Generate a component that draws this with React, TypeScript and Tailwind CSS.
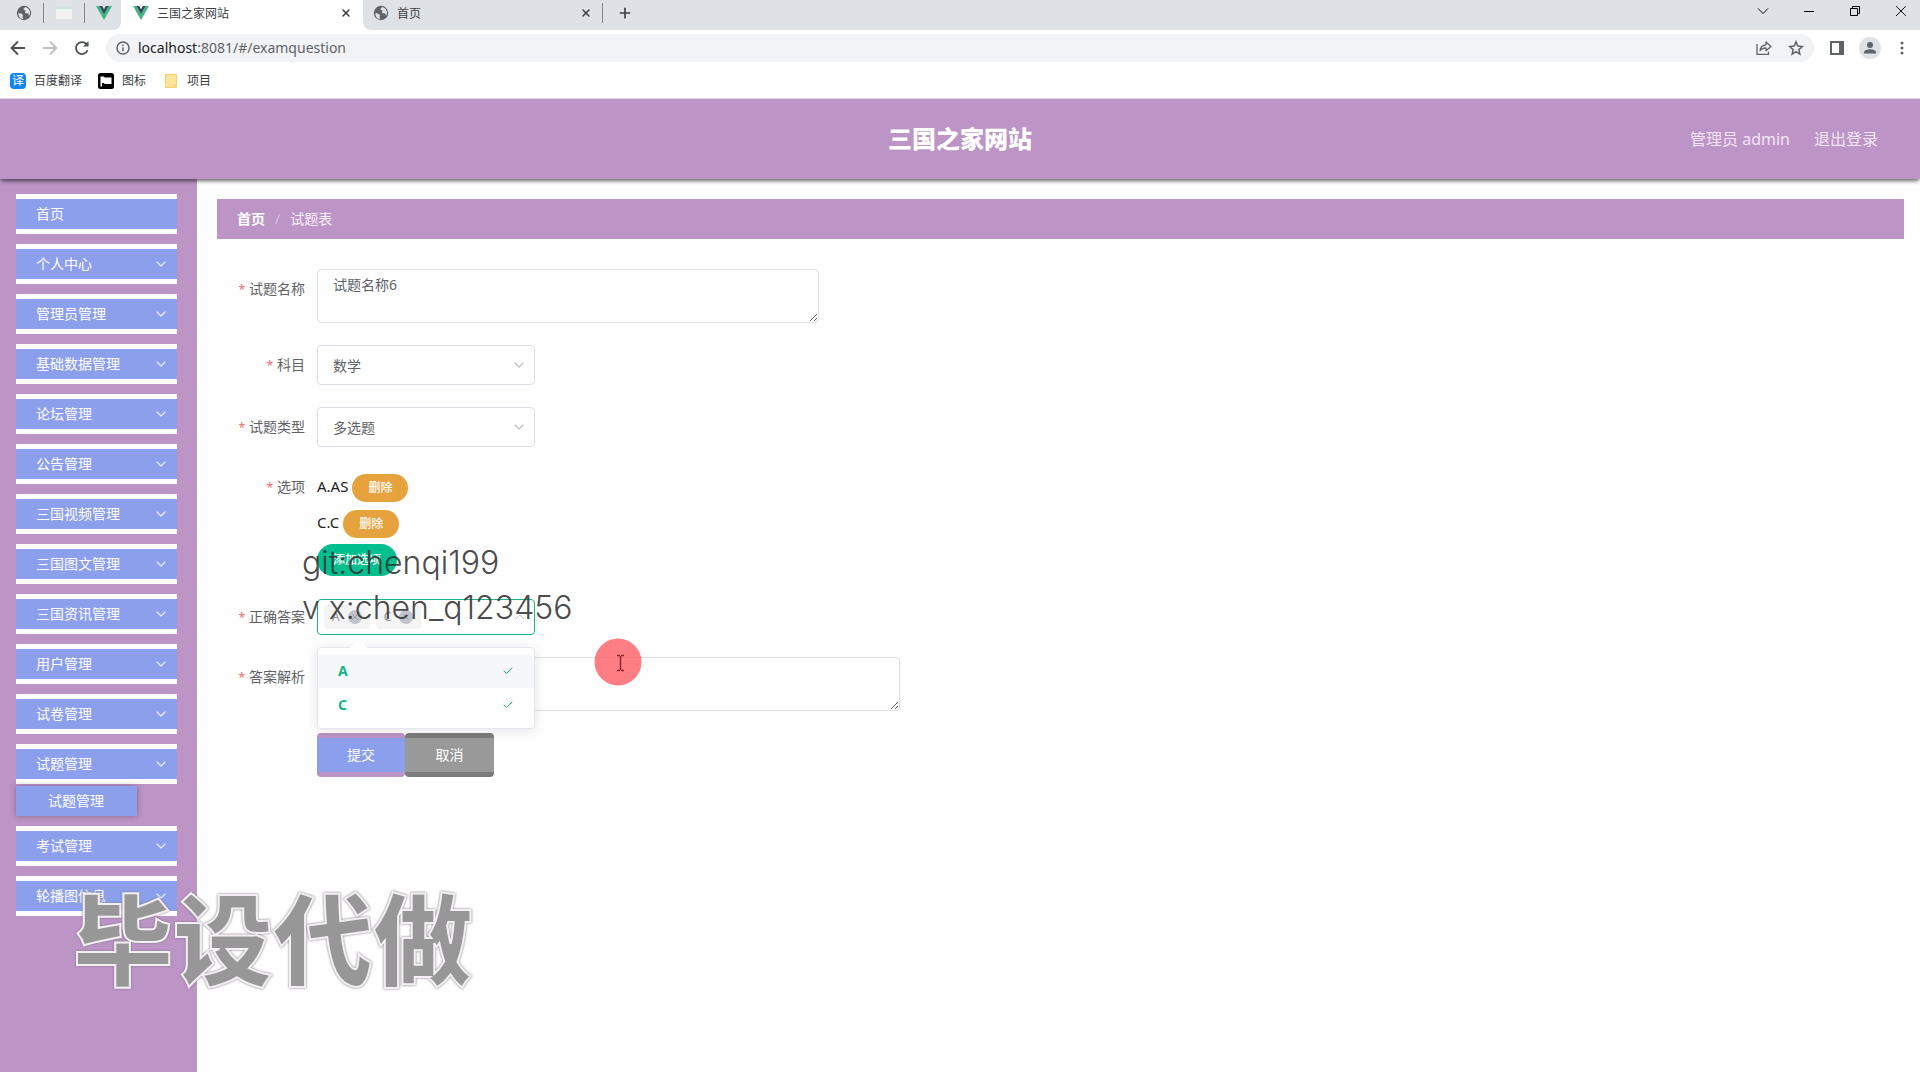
import { useState } from 'react';
import type { ReactNode } from 'react';
import { Check, ChevronDown, ChevronUp, Plus, X } from 'lucide-react';

const MENU = [
  '首页',
  '个人中心',
  '管理员管理',
  '基础数据管理',
  '论坛管理',
  '公告管理',
  '三国视频管理',
  '三国图文管理',
  '三国资讯管理',
  '用户管理',
  '试卷管理',
  '试题管理',
  '考试管理',
  '轮播图信息',
];

function VueLogo() {
  return (
    <svg viewBox="0 0 16 14" className="h-3.5 w-4 shrink-0">
      <path d="M0 0h3.3L8 8.2 12.7 0H16L8 14z" fill="#41b883" />
      <path d="M3.3 0h2.9L8 3.2 9.8 0h2.9L8 8.2z" fill="#35495e" />
    </svg>
  );
}

function Globe() {
  return (
    <svg viewBox="0 0 16 16" className="size-4 shrink-0">
      <circle cx="8" cy="8" r="7.2" fill="#5f6368" />
      <path d="M2.2 8.2c1.600.2 3.300 0 4.300 1.200.9 1.200-.4 1.900.3 3 .4.600.5 1.200.2 1.900A6.400 6.400 0 0 1 2.200 8.200z" fill="#dee1e6" />
      <path d="M9.500 2c-.8.900-2.200 1.100-2 2.200.2.900 1.700.6 1.900 1.600.2.900-.9 1.400-.1 2.200.8.700 2.100-.4 2.900.6.500.7.300 1.700.9 2.300A6 6 0 0 0 9.500 2z" fill="#dee1e6" />
    </svg>
  );
}

function BrowserChrome() {
  return (
    <header className="bg-white text-xs text-[#3c4043]">
      <div className="flex h-[30px] items-stretch bg-[#dee1e6]">
        <div className="flex bg-white">
          <div className="flex w-[121px] items-center rounded-br-lg bg-[#dee1e6] pb-1 pl-4">
            <Globe />
            <span className="ml-[11px] h-5 w-px bg-[#80868b]" />
            <svg viewBox="0 0 16 12" className="ml-3 h-3 w-4">
              <path d="M0 0h16v12H0z" fill="#f1f4f3" />
              <path d="M0 0h16v2H0z" fill="#cfe6dc" />
            </svg>
            <span className="ml-3 h-5 w-px bg-[#80868b]" />
            <span className="ml-[11px]"><VueLogo /></span>
          </div>
          <div className="flex w-[242px] items-center pr-[11px] pb-1 pl-3">
            <VueLogo />
            <span className="ml-2 flex-1 pt-0.5">三国之家网站</span>
            <button aria-label="关闭标签页"><X className="size-3" strokeWidth={3} /></button>
          </div>
          <div className="flex w-[240px] items-center rounded-bl-lg bg-[#dee1e6] pb-1 pl-2.5">
            <Globe />
            <span className="ml-2 flex-1 pt-0.5">首页</span>
            <button aria-label="关闭标签页" className="mr-2.5"><X className="size-3" strokeWidth={3} /></button>
            <span className="h-5 w-px bg-[#80868b]" />
          </div>
        </div>
        <button aria-label="新标签页" className="ml-3.5 pb-1"><Plus className="size-4" strokeWidth={2.500} /></button>
        <div className="ml-auto flex gap-[34px] pr-[13px] pb-2 text-black">
          <button aria-label="搜索标签页">
            <svg viewBox="0 0 12 12" className="size-3" fill="none" stroke="currentColor"><path d="M1 3.500l5 5 5-5" /></svg>
          </button>
          <button aria-label="最小化">
            <svg viewBox="0 0 12 12" className="size-3" fill="none" stroke="currentColor"><path d="M1 6.500h10" /></svg>
          </button>
          <button aria-label="还原">
            <svg viewBox="0 0 12 12" className="size-3" fill="none" stroke="currentColor"><path d="M1.500 3.500h7v7h-7zM3.500 3.500v-2h7v7h-2" /></svg>
          </button>
          <button aria-label="关闭">
            <svg viewBox="0 0 12 12" className="size-3" fill="none" stroke="currentColor"><path d="M1 1l10 10M11 1L1 11" /></svg>
          </button>
        </div>
      </div>
      <div className="flex h-9 items-center pr-3 pl-2.5 text-[#5f6368]">
        <button aria-label="后退">
          <svg viewBox="0 0 16 16" className="size-4" fill="none" stroke="#4d5156" strokeWidth="1.800"><path d="M15 8H2M8 1.500L1.500 8 8 14.500" /></svg>
        </button>
        <button aria-label="前进" className="ml-4">
          <svg viewBox="0 0 16 16" className="size-4" fill="none" stroke="#bdc1c6" strokeWidth="1.800"><path d="M1 8h13M8 1.500L14.500 8 8 14.500" /></svg>
        </button>
        <button aria-label="重新加载" className="ml-4">
          <svg viewBox="0 0 16 16" className="size-4" fill="none" stroke="#4d5156" strokeWidth="1.800">
            <path d="M13.600 10.200A6 6 0 1 1 12.600 4.200L14 5.700" />
            <path d="M14.500 1v5.500H9z" fill="#4d5156" stroke="none" />
          </svg>
        </button>
        <div className="ml-4 flex h-7 flex-1 items-center rounded-full bg-[#f1f3f4] px-2.5">
          <svg viewBox="0 0 14 14" className="size-3.5" fill="none" stroke="#5f6368" strokeWidth="1.500">
            <circle cx="7" cy="7" r="6" /><path d="M7 6.200v4M7 3.500v1.500" />
          </svg>
          <a href="#/examquestion" className="ml-2 text-sm"><span className="text-[#202124]">localhost</span>:8081/#/examquestion</a>
          <button aria-label="分享" className="ml-auto">
            <svg viewBox="0 0 16 16" className="size-4" fill="none" stroke="#5f6368" strokeWidth="1.300">
              <path d="M1 4v10.300h11.500v-2.500" />
              <path d="M4 10.500c.4-3.700 2.800-5.500 6-5.700V2l5 4.500-5 4.300V8C7.500 8 5.500 8.500 4 10.500z" strokeLinejoin="round" />
            </svg>
          </button>
          <button aria-label="收藏" className="ml-4">
            <svg viewBox="0 0 16 16" className="size-4" fill="none" stroke="#5f6368" strokeWidth="1.500">
              <path d="M8 1.800l1.800 4.300 4.600.4-3.500 3.100 1 4.500L8 11.700l-3.900 2.400 1-4.500L1.600 6.500l4.600-.4z" />
            </svg>
          </button>
        </div>
        <button aria-label="侧边栏" className="ml-4">
          <svg viewBox="0 0 14 14" className="size-3.5"><path d="M1 1h12v12H1z" fill="none" stroke="#5f6368" strokeWidth="2" /><path d="M9 0h5v14H9z" fill="#5f6368" /></svg>
        </button>
        <button aria-label="用户" className="ml-[15px]">
          <svg viewBox="0 0 22 22" className="size-[22px]">
            <circle cx="11" cy="11" r="11" fill="#dee1e6" />
            <circle cx="11" cy="8" r="3" fill="#5f6368" />
            <path d="M5 16.500v-1.200c0-2 3.500-3 6-3s6 1 6 3v1.200z" fill="#5f6368" />
          </svg>
        </button>
        <button aria-label="更多" className="ml-[15px]">
          <svg viewBox="0 0 12 14" className="h-3.5 w-3" fill="#5f6368"><circle cx="6" cy="2" r="1.500" /><circle cx="6" cy="7" r="1.500" /><circle cx="6" cy="12" r="1.500" /></svg>
        </button>
      </div>
      <nav className="flex h-[33px] items-center border-b border-[#dadce0] pb-0.5 pl-2.5">
        <a href="#fanyi" className="flex items-center">
          <span className="flex size-4 items-center justify-center rounded-sm bg-[#1285f5] text-white">译</span>
          <span className="ml-2">百度翻译</span>
        </a>
        <a href="#icons" className="ml-4 flex items-center">
          <svg viewBox="0 0 16 16" className="size-4">
            <rect width="16" height="16" rx="2.500" fill="#000" />
            <path d="M2.500 13.500V3.500h3l1.500 1h6.500v6.500H7l-1.500-1H4v3.500z" fill="#fff" />
          </svg>
          <span className="ml-2">图标</span>
        </a>
        <a href="#project" className="ml-[19px] flex items-center">
          <svg viewBox="0 0 12 14" className="h-3.5 w-3">
            <path d="M.5.5h11v13H.5z" fill="#fde49a" stroke="#f5cf6c" />
            <path d="M8 10.500h4V14H8z" fill="#f9d978" />
          </svg>
          <span className="ml-2.5">项目</span>
        </a>
      </nav>
    </header>
  );
}

function Sidebar() {
  return (
    <aside className="w-[197px] shrink-0 border-r border-[#a9a3b5] bg-[#bc94c6] pt-[15px] pl-4">
      <nav className="w-[161px] text-sm text-white">
        {MENU.map((item, index) => (
          <div key={item} className="mb-2.5">
            <button className="flex h-10 w-full items-center justify-between border-y-[5px] border-white bg-[#8c9fed] pr-2 pl-5">
              {item}
              {index > 0 && <ChevronDown className="size-4 text-[#e4e8fb]" strokeWidth={2} />}
            </button>
            {item === '试题管理' && (
              <a href="#/examquestion" className="mt-0.5 flex h-[30px] w-[121px] items-center bg-[#8c9fed] pl-8 shadow-[0_0_6px_rgba(0,0,0,0.3)]">
                试题管理
              </a>
            )}
          </div>
        ))}
      </nav>
    </aside>
  );
}

function Row({ label, htmlFor, short, children }: { label: string; htmlFor: string; short?: boolean; children: ReactNode }) {
  return (
    <div className="mb-[22px] flex items-start">
      <label
        htmlFor={htmlFor}
        className={`w-20 shrink-0 pr-3 text-right text-[#606266] ${short ? 'leading-9' : 'leading-10'}`}
      >
        <span className="mr-1 text-xs text-[#f56c6c]">*</span>
        {label}
      </label>
      {children}
    </div>
  );
}

function SelectBox({ id, value }: { id: string; value: string }) {
  return (
    <div className="relative w-[218px]">
      <select id={id} defaultValue={value} className="h-10 w-full appearance-none rounded border border-[#dcdfe6] bg-white px-[15px] pt-0.5 text-[#606266]">
        <option>{value}</option>
      </select>
      <ChevronDown className="pointer-events-none absolute top-3 right-2 size-4 text-[#c0c4cc]" strokeWidth={2} />
    </div>
  );
}

function AnswerSelect() {
  const [picked] = useState(['A', 'C']);
  return (
    <div className="relative w-[218px]">
      <button id="answer" type="button" className="flex h-9 w-full items-center gap-1.5 rounded border border-[#16b48a] bg-white px-1.5 text-xs text-[#909399]">
        {picked.map((p) => (
          <span key={p} className="flex h-6 items-center gap-2 rounded bg-[#f4f4f5] px-2">
            {p}
            <span className="flex size-3.5 items-center justify-center rounded-full bg-[#c0c4cc]"><X className="size-2.5" /></span>
          </span>
        ))}
        <ChevronUp className="ml-auto size-4 text-[#c0c4cc]" strokeWidth={1.500} />
      </button>
      <ul role="listbox" className="absolute top-12 left-0 z-10 w-full rounded border border-[#e4e7ed] bg-white py-1.5 font-bold text-[#12b588] shadow-[0_2px_12px_rgba(0,0,0,0.1)]">
        <li aria-hidden="true" className="absolute -top-1.5 left-[35px] size-3 rotate-45 bg-white" />
        {picked.map((p, i) => (
          <li key={p} role="option" aria-selected="true" className={`relative flex h-[34px] items-center justify-between px-5 ${i === 0 ? 'bg-[#f5f7fa]' : ''}`}>
            {p}
            <Check className="size-3" strokeWidth={2} />
          </li>
        ))}
      </ul>
    </div>
  );
}

function QuestionForm() {
  return (
    <form className="pt-[30px] pl-5 text-sm" onSubmit={(e) => e.preventDefault()}>
      <Row label="试题名称" htmlFor="title">
        <textarea id="title" defaultValue="试题名称6" className="block h-[54px] w-[502px] rounded border border-[#dcdfe6] px-[15px] py-[5px] text-[#606266]" />
      </Row>
      <Row label="科目" htmlFor="subject"><SelectBox id="subject" value="数学" /></Row>
      <Row label="试题类型" htmlFor="type"><SelectBox id="type" value="多选题" /></Row>
      <Row label="选项" htmlFor="add-option" short>
        <div className="text-[#222]">
          {['A.AS', 'C.C'].map((o) => (
            <div key={o} className="flex h-9 items-center gap-1 text-[15px]">
              {o}
              <button type="button" className="mt-0.5 h-7 w-14 rounded-full bg-[#e6a23c] text-xs font-medium text-white">删除</button>
            </div>
          ))}
          <div className="flex h-9 items-center">
            <button id="add-option" type="button" className="mt-0.5 h-8 w-20 rounded-full bg-[#00bf8f] text-xs font-medium text-white">添加选项</button>
          </div>
        </div>
      </Row>
      <Row label="正确答案" htmlFor="answer" short><AnswerSelect /></Row>
      <Row label="答案解析" htmlFor="analysis">
        <textarea id="analysis" className="block h-[54px] w-[583px] rounded border border-[#dcdfe6] px-[15px] py-[5px]" />
      </Row>
      <div className="flex pl-20 text-white">
        <button type="submit" className="h-11 w-[88px] rounded border-y-[5px] border-[#bc94c6] bg-[#8c9fed]">提交</button>
        <button type="button" className="h-11 w-[89px] rounded border-y-[5px] border-[#7c7c7c] bg-[#999999]">取消</button>
      </div>
    </form>
  );
}

function Overlays() {
  return (
    <div className="pointer-events-none">
      <p className="absolute top-[540px] left-[302px] z-20 font-['Inter','Noto_Sans_CJK_SC',sans-serif] text-[32px] leading-[45px] font-light whitespace-pre text-[#333]/90">
        {'git:chenqi199\nv x:chen_q123456'}
      </p>
      <p className="absolute top-[867px] left-[73px] z-20 text-[100px] leading-[144px] font-black whitespace-nowrap text-[#979797] [-webkit-text-stroke:2px_#f4eef5] drop-shadow-[0_0_1px_#777]">
        毕设代做
      </p>
      <svg viewBox="0 0 48 48" className="absolute top-[638px] left-[594px] z-20 size-12">
        <circle cx="24" cy="24" r="23.500" fill="#ff5a60" fillOpacity="0.780" />
        <path d="M23 17.500h3m1 0h3M26.500 18v14M23 32.500h3m1 0h3" stroke="#8c2630" strokeWidth="1.500" />
      </svg>
    </div>
  );
}

export default function App() {
  return (
    <div className="relative flex min-h-screen flex-col overflow-hidden bg-[#fefefe] font-['Noto_Sans','Noto_Sans_CJK_SC',sans-serif]">
      <BrowserChrome />
      <div className="relative z-10 grid h-20 grid-cols-3 items-center bg-[#bc94c6] pr-[42px] text-white shadow-[0_3px_4px_-1px_rgba(0,0,0,0.6)]">
        <h1 className="col-start-2 pl-[42px] text-center text-2xl font-black">三国之家网站</h1>
        <div className="flex justify-end gap-6 text-[#f3e4f6]">
          <span>管理员 admin</span>
          <button>退出登录</button>
        </div>
      </div>
      <div className="flex flex-1">
        <Sidebar />
        <main className="flex-1 pt-5 pr-4 pl-5">
          <nav className="flex h-10 items-center bg-[#bc94c6] px-5 text-sm text-white">
            <a href="#/" className="font-bold">首页</a>
            <span className="mx-2.5 text-[#d5c0e0]">/</span>
            <span className="text-[#fbeffd]">试题表</span>
          </nav>
          <QuestionForm />
        </main>
      </div>
      <Overlays />
    </div>
  );
}
